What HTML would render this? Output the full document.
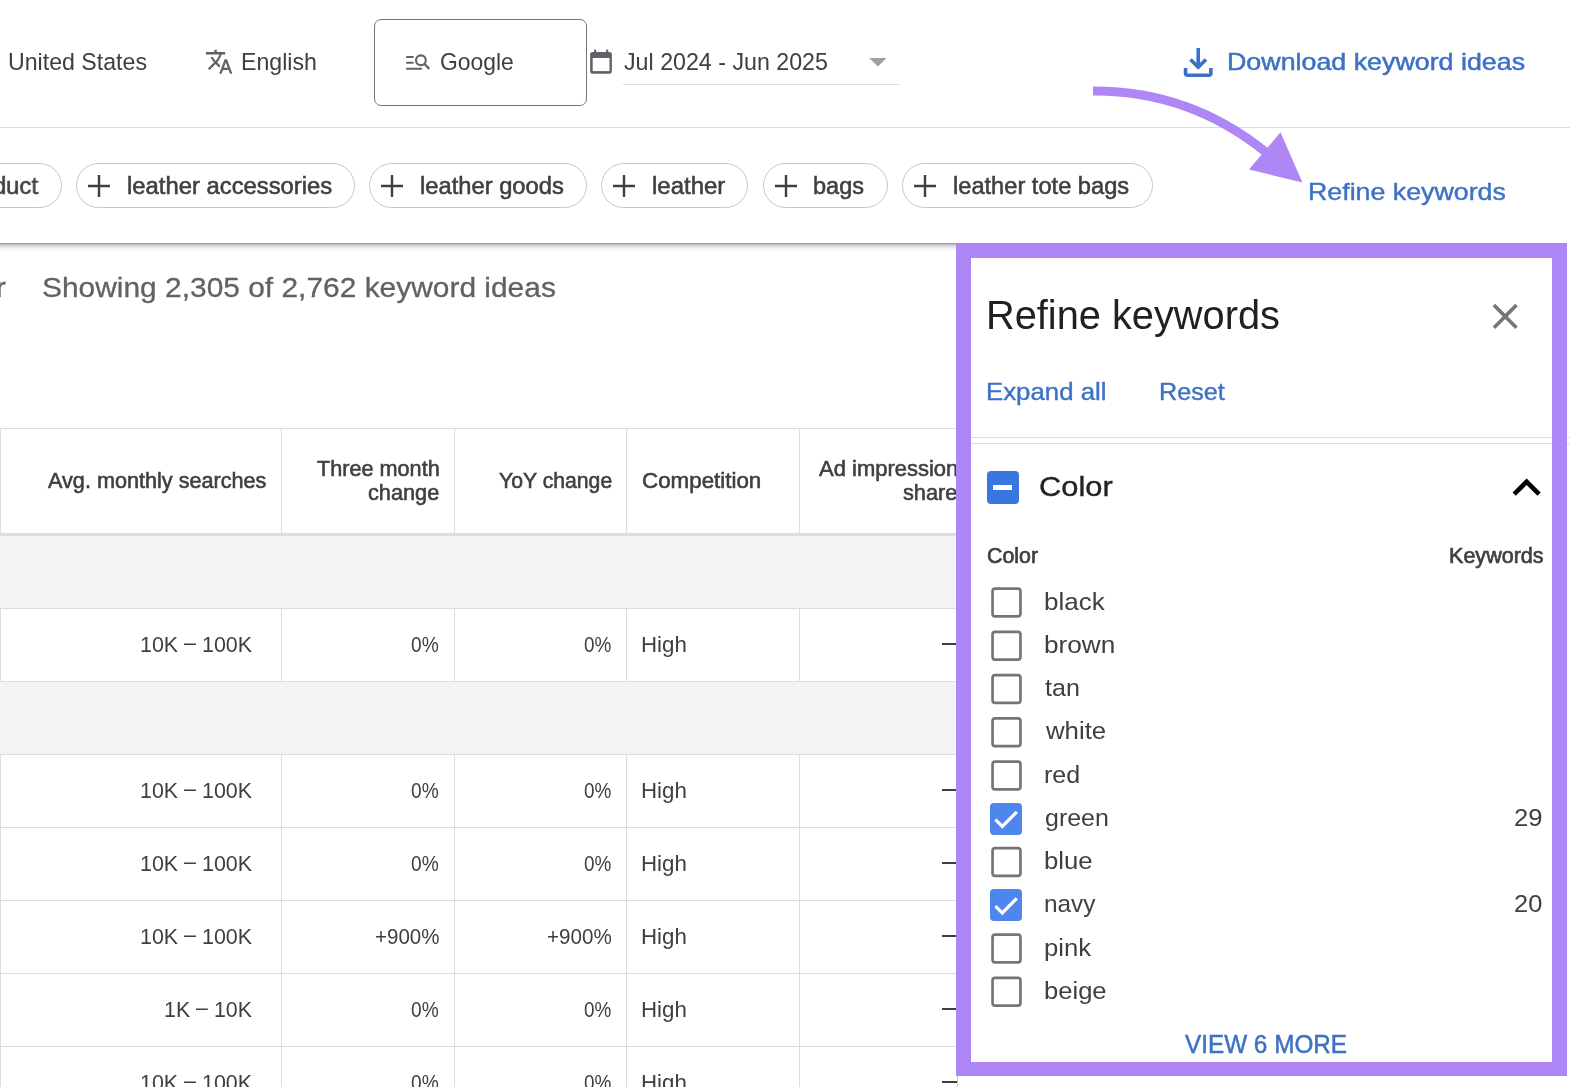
<!DOCTYPE html>
<html lang="en">
<head>
<meta charset="utf-8">
<title>Keyword ideas – Refine keywords</title>
<style>
html,body{margin:0;padding:0;background:#fff}
body{width:1570px;height:1087px;overflow:hidden;position:relative;font-family:"Liberation Sans",sans-serif}
#page{position:absolute;left:0;top:0;width:1570px;height:1087px;overflow:hidden;background:#fff}
.b{position:absolute}
.t{position:absolute;white-space:nowrap;line-height:1;transform-origin:0 0;font-weight:400;font-family:"Liberation Sans",sans-serif}
.ov{position:absolute;left:0;top:0;pointer-events:none}
#clipA{position:absolute;left:0;top:0;width:957px;height:1087px;overflow:hidden;will-change:transform}
#txt{position:absolute;left:0;top:0;width:1570px;height:1087px;will-change:transform}
</style>
</head>
<body>
<div id="page">
<div id="clipA">
<span class="t" style="left:818.86px;top:459px;font-size:21.3px;color:#3c4043;transform:scaleX(1.0321);-webkit-text-stroke:0.55px #3c4043;">Ad impression</span>
<span class="t" style="left:903.32px;top:483px;font-size:21.3px;color:#3c4043;transform:scaleX(1.0200);-webkit-text-stroke:0.55px #3c4043;">share</span>
</div>
<div class="b" style="left:0px;top:127px;width:1570px;height:1px;background:#dadce0"></div>
<div class="b" style="left:374px;top:19px;width:213px;height:87px;border:1px solid #747775;border-radius:7px;box-sizing:border-box"></div>
<div class="b" style="left:623px;top:84px;width:277px;height:1px;background:#dadce0"></div>
<div class="b" style="left:0px;top:243px;width:956px;height:9px;background:linear-gradient(to bottom,#8d8d8d 0,#b5b5b5 12%,#cfcfcf 25%,#e2e2e2 40%,#f0f0f0 58%,#f9f9f9 78%,#fff 100%)"></div>
<div class="b" style="left:-120px;top:163px;width:182px;height:45px;border:1px solid #c4c7c5;border-radius:23px;box-sizing:border-box"></div>
<div class="b" style="left:76px;top:163px;width:279px;height:45px;border:1px solid #c4c7c5;border-radius:23px;box-sizing:border-box"></div>
<div class="b" style="left:369px;top:163px;width:218px;height:45px;border:1px solid #c4c7c5;border-radius:23px;box-sizing:border-box"></div>
<div class="b" style="left:601px;top:163px;width:147px;height:45px;border:1px solid #c4c7c5;border-radius:23px;box-sizing:border-box"></div>
<div class="b" style="left:763px;top:163px;width:125px;height:45px;border:1px solid #c4c7c5;border-radius:23px;box-sizing:border-box"></div>
<div class="b" style="left:902px;top:163px;width:251px;height:45px;border:1px solid #c4c7c5;border-radius:23px;box-sizing:border-box"></div>
<div class="b" style="left:0px;top:428px;width:972px;height:1px;background:#dadce0"></div>
<div class="b" style="left:0px;top:533px;width:972px;height:3px;background:#dcdde0"></div>
<div class="b" style="left:0px;top:536px;width:972px;height:72.5px;background:#f1f3f4"></div>
<div class="b" style="left:0px;top:682px;width:972px;height:72.5px;background:#f1f3f4"></div>
<div class="b" style="left:0px;top:608px;width:972px;height:1px;background:#dadce0"></div>
<div class="b" style="left:0px;top:681px;width:972px;height:1px;background:#dadce0"></div>
<div class="b" style="left:0px;top:754px;width:972px;height:1px;background:#dadce0"></div>
<div class="b" style="left:0px;top:827px;width:972px;height:1px;background:#dadce0"></div>
<div class="b" style="left:0px;top:900px;width:972px;height:1px;background:#dadce0"></div>
<div class="b" style="left:0px;top:973px;width:972px;height:1px;background:#dadce0"></div>
<div class="b" style="left:0px;top:1046px;width:972px;height:1px;background:#dadce0"></div>
<div class="b" style="left:0px;top:429px;width:1px;height:104px;background:#dadce0"></div>
<div class="b" style="left:0px;top:609px;width:1px;height:72px;background:#dadce0"></div>
<div class="b" style="left:0px;top:755px;width:1px;height:332px;background:#dadce0"></div>
<div class="b" style="left:281px;top:429px;width:1px;height:104px;background:#dadce0"></div>
<div class="b" style="left:281px;top:609px;width:1px;height:72px;background:#dadce0"></div>
<div class="b" style="left:281px;top:755px;width:1px;height:332px;background:#dadce0"></div>
<div class="b" style="left:454px;top:429px;width:1px;height:104px;background:#dadce0"></div>
<div class="b" style="left:454px;top:609px;width:1px;height:72px;background:#dadce0"></div>
<div class="b" style="left:454px;top:755px;width:1px;height:332px;background:#dadce0"></div>
<div class="b" style="left:626px;top:429px;width:1px;height:104px;background:#dadce0"></div>
<div class="b" style="left:626px;top:609px;width:1px;height:72px;background:#dadce0"></div>
<div class="b" style="left:626px;top:755px;width:1px;height:332px;background:#dadce0"></div>
<div class="b" style="left:799px;top:429px;width:1px;height:104px;background:#dadce0"></div>
<div class="b" style="left:799px;top:609px;width:1px;height:72px;background:#dadce0"></div>
<div class="b" style="left:799px;top:755px;width:1px;height:332px;background:#dadce0"></div>
<div class="b" style="left:942px;top:643.1px;width:16px;height:2px;background:#3c4043"></div>
<div class="b" style="left:942px;top:789.1px;width:16px;height:2px;background:#3c4043"></div>
<div class="b" style="left:942px;top:862.1px;width:16px;height:2px;background:#3c4043"></div>
<div class="b" style="left:942px;top:935.1px;width:16px;height:2px;background:#3c4043"></div>
<div class="b" style="left:942px;top:1008.1px;width:16px;height:2px;background:#3c4043"></div>
<div class="b" style="left:942px;top:1081.1px;width:16px;height:2px;background:#3c4043"></div>
<div class="b" style="left:957px;top:252px;width:613px;height:835px;background:#fff"></div>
<div class="b" style="left:957px;top:1076px;width:1px;height:11px;background:#c8c8c8"></div>
<div class="b" style="left:956.3px;top:243.2px;width:611.1px;height:832.8px;background:#af86f5"></div>
<div class="b" style="left:971.2px;top:258.2px;width:581.1px;height:803.4px;background:#fff"></div>
<div class="b" style="left:971px;top:437px;width:599px;height:1px;background:#dadce0"></div>
<div class="b" style="left:971px;top:443px;width:599px;height:1px;background:#dadce0"></div>
<div class="b" style="left:1552.3px;top:430px;width:15.1px;height:20px;background:#af86f5"></div>
<div class="b" style="left:987px;top:471px;width:32px;height:32.5px;background:#3a76e0;border-radius:4px"></div>
<div class="b" style="left:993.3px;top:485px;width:18.8px;height:4.6px;background:#fff"></div>
<div class="b" style="left:990.2px;top:802.75px;width:32px;height:32px;background:#4d86ec;border-radius:4px"></div>
<div class="b" style="left:990.2px;top:889.25px;width:32px;height:32px;background:#4d86ec;border-radius:4px"></div>
<div id="txt">
<span class="t" style="left:7.91px;top:50px;font-size:24.3px;color:#3c4043;transform:scaleX(0.9530);">United States</span>
<span class="t" style="left:240.60px;top:50px;font-size:24.3px;color:#3c4043;transform:scaleX(0.9536);">English</span>
<span class="t" style="left:439.95px;top:50px;font-size:24.3px;color:#3c4043;transform:scaleX(0.9427);">Google</span>
<span class="t" style="left:623.54px;top:50px;font-size:24.3px;color:#3c4043;transform:scaleX(0.9555);">Jul 2024 - Jun 2025</span>
<span class="t" style="left:1227.00px;top:50px;font-size:23.8px;color:#3d71c6;transform:scaleX(1.1266);-webkit-text-stroke:0.5px #3d71c6;">Download keyword ideas</span>
<span class="t" style="left:1307.90px;top:180px;font-size:23.8px;color:#3d71c6;transform:scaleX(1.1247);-webkit-text-stroke:0.4px #3d71c6;">Refine keywords</span>
<span class="t" style="left:127.09px;top:174px;font-size:24.2px;color:#3c4043;transform:scaleX(0.9850);-webkit-text-stroke:0.55px #3c4043;">leather accessories</span>
<span class="t" style="left:420.20px;top:174px;font-size:24.2px;color:#3c4043;transform:scaleX(0.9808);-webkit-text-stroke:0.55px #3c4043;">leather goods</span>
<span class="t" style="left:651.88px;top:174px;font-size:24.2px;color:#3c4043;transform:scaleX(0.9912);-webkit-text-stroke:0.55px #3c4043;">leather</span>
<span class="t" style="left:813.48px;top:174px;font-size:24.2px;color:#3c4043;transform:scaleX(0.9716);-webkit-text-stroke:0.55px #3c4043;">bags</span>
<span class="t" style="left:953.41px;top:174px;font-size:24.2px;color:#3c4043;transform:scaleX(0.9775);-webkit-text-stroke:0.55px #3c4043;">leather tote bags</span>
<span class="t" style="left:-120.56px;top:174px;font-size:24.2px;color:#3c4043;transform:scaleX(0.9850);-webkit-text-stroke:0.55px #3c4043;">leather product</span>
<span class="t" style="left:42.04px;top:274px;font-size:27.9px;color:#5f6368;transform:scaleX(1.0725);-webkit-text-stroke:0.3px #5f6368;">Showing 2,305 of 2,762 keyword ideas</span>
<span class="t" style="left:-113.28px;top:274px;font-size:27.9px;color:#5f6368;transform:scaleX(1.0800);-webkit-text-stroke:0.3px #5f6368;">Add filter</span>
<span class="t" style="left:47.86px;top:471px;font-size:21.3px;color:#3c4043;transform:scaleX(1.0156);-webkit-text-stroke:0.55px #3c4043;">Avg. monthly searches</span>
<span class="t" style="left:317.01px;top:459px;font-size:21.3px;color:#3c4043;transform:scaleX(1.0161);-webkit-text-stroke:0.55px #3c4043;">Three month</span>
<span class="t" style="left:367.99px;top:483px;font-size:21.3px;color:#3c4043;transform:scaleX(1.0200);-webkit-text-stroke:0.55px #3c4043;">change</span>
<span class="t" style="left:498.53px;top:471px;font-size:21.3px;color:#3c4043;transform:scaleX(0.9956);-webkit-text-stroke:0.55px #3c4043;">YoY change</span>
<span class="t" style="left:641.66px;top:471px;font-size:21.3px;color:#3c4043;transform:scaleX(1.0497);-webkit-text-stroke:0.55px #3c4043;">Competition</span>
<span class="t" style="left:139.67px;top:634px;font-size:22.0px;color:#3c4043;transform:scaleX(0.9747);">10K <span style="position:relative;top:-2.4px">–</span> 100K</span>
<span class="t" style="left:411.35px;top:634px;font-size:22.0px;color:#3c4043;transform:scaleX(0.8689);">0%</span>
<span class="t" style="left:584.36px;top:634px;font-size:22.0px;color:#3c4043;transform:scaleX(0.8589);">0%</span>
<span class="t" style="left:640.77px;top:634px;font-size:22.0px;color:#3c4043;transform:scaleX(1.0139);">High</span>
<span class="t" style="left:139.67px;top:780px;font-size:22.0px;color:#3c4043;transform:scaleX(0.9747);">10K <span style="position:relative;top:-2.4px">–</span> 100K</span>
<span class="t" style="left:411.35px;top:780px;font-size:22.0px;color:#3c4043;transform:scaleX(0.8689);">0%</span>
<span class="t" style="left:584.36px;top:780px;font-size:22.0px;color:#3c4043;transform:scaleX(0.8589);">0%</span>
<span class="t" style="left:640.77px;top:780px;font-size:22.0px;color:#3c4043;transform:scaleX(1.0139);">High</span>
<span class="t" style="left:139.67px;top:853px;font-size:22.0px;color:#3c4043;transform:scaleX(0.9747);">10K <span style="position:relative;top:-2.4px">–</span> 100K</span>
<span class="t" style="left:411.35px;top:853px;font-size:22.0px;color:#3c4043;transform:scaleX(0.8689);">0%</span>
<span class="t" style="left:584.36px;top:853px;font-size:22.0px;color:#3c4043;transform:scaleX(0.8589);">0%</span>
<span class="t" style="left:640.77px;top:853px;font-size:22.0px;color:#3c4043;transform:scaleX(1.0139);">High</span>
<span class="t" style="left:139.67px;top:926px;font-size:22.0px;color:#3c4043;transform:scaleX(0.9747);">10K <span style="position:relative;top:-2.4px">–</span> 100K</span>
<span class="t" style="left:374.50px;top:926px;font-size:22.0px;color:#3c4043;transform:scaleX(0.9336);">+900%</span>
<span class="t" style="left:546.99px;top:926px;font-size:22.0px;color:#3c4043;transform:scaleX(0.9366);">+900%</span>
<span class="t" style="left:640.77px;top:926px;font-size:22.0px;color:#3c4043;transform:scaleX(1.0139);">High</span>
<span class="t" style="left:163.87px;top:999px;font-size:22.0px;color:#3c4043;transform:scaleX(0.9707);">1K <span style="position:relative;top:-2.4px">–</span> 10K</span>
<span class="t" style="left:411.35px;top:999px;font-size:22.0px;color:#3c4043;transform:scaleX(0.8689);">0%</span>
<span class="t" style="left:584.36px;top:999px;font-size:22.0px;color:#3c4043;transform:scaleX(0.8589);">0%</span>
<span class="t" style="left:640.77px;top:999px;font-size:22.0px;color:#3c4043;transform:scaleX(1.0139);">High</span>
<span class="t" style="left:139.67px;top:1072px;font-size:22.0px;color:#3c4043;transform:scaleX(0.9747);">10K <span style="position:relative;top:-2.4px">–</span> 100K</span>
<span class="t" style="left:411.35px;top:1072px;font-size:22.0px;color:#3c4043;transform:scaleX(0.8689);">0%</span>
<span class="t" style="left:584.36px;top:1072px;font-size:22.0px;color:#3c4043;transform:scaleX(0.8589);">0%</span>
<span class="t" style="left:640.77px;top:1072px;font-size:22.0px;color:#3c4043;transform:scaleX(1.0139);">High</span>
<span class="t" style="left:986.44px;top:295px;font-size:40.0px;color:#202124;transform:scaleX(0.9939);">Refine keywords</span>
<span class="t" style="left:986.28px;top:380px;font-size:24.4px;color:#3d71c6;transform:scaleX(1.0574);-webkit-text-stroke:0.4px #3d71c6;">Expand all</span>
<span class="t" style="left:1159.43px;top:380px;font-size:24.4px;color:#3d71c6;transform:scaleX(1.0319);-webkit-text-stroke:0.4px #3d71c6;">Reset</span>
<span class="t" style="left:1038.63px;top:472px;font-size:28.3px;color:#202124;transform:scaleX(1.0895);-webkit-text-stroke:0.35px #202124;">Color</span>
<span class="t" style="left:987.02px;top:546px;font-size:21.3px;color:#3c4043;transform:scaleX(1.0026);-webkit-text-stroke:0.65px #3c4043;">Color</span>
<span class="t" style="left:1449.03px;top:546px;font-size:21.3px;color:#3c4043;transform:scaleX(1.0121);-webkit-text-stroke:0.65px #3c4043;">Keywords</span>
<span class="t" style="left:1044.13px;top:590px;font-size:24.4px;color:#3c4043;transform:scaleX(1.0647);">black</span>
<span class="t" style="left:1044.11px;top:633px;font-size:24.4px;color:#3c4043;transform:scaleX(1.0730);">brown</span>
<span class="t" style="left:1045.42px;top:676px;font-size:24.4px;color:#3c4043;transform:scaleX(1.0292);">tan</span>
<span class="t" style="left:1045.84px;top:719px;font-size:24.4px;color:#3c4043;transform:scaleX(1.0572);">white</span>
<span class="t" style="left:1044.14px;top:763px;font-size:24.4px;color:#3c4043;transform:scaleX(1.0258);">red</span>
<span class="t" style="left:1044.75px;top:806px;font-size:24.4px;color:#3c4043;transform:scaleX(1.0237);">green</span>
<span class="t" style="left:1044.14px;top:849px;font-size:24.4px;color:#3c4043;transform:scaleX(1.0536);">blue</span>
<span class="t" style="left:1044.18px;top:892px;font-size:24.4px;color:#3c4043;transform:scaleX(0.9987);">navy</span>
<span class="t" style="left:1044.14px;top:936px;font-size:24.4px;color:#3c4043;transform:scaleX(1.0529);">pink</span>
<span class="t" style="left:1044.15px;top:979px;font-size:24.4px;color:#3c4043;transform:scaleX(1.0486);">beige</span>
<span class="t" style="left:1513.61px;top:806px;font-size:24.4px;color:#3c4043;transform:scaleX(1.0502);">29</span>
<span class="t" style="left:1513.62px;top:892px;font-size:24.4px;color:#3c4043;transform:scaleX(1.0417);">20</span>
<span class="t" style="left:1185.39px;top:1032px;font-size:25.2px;color:#3d71c6;transform:scaleX(0.9650);-webkit-text-stroke:0.5px #3d71c6;">VIEW 6 MORE</span>
</div>
<svg class="ov" width="1570" height="1087" viewBox="0 0 1570 1087">
<g fill="#5f6368">
<path transform="translate(204.8 47.3) scale(1.2)" d="M12.87 15.07l-2.54-2.51.03-.03c1.74-1.94 2.98-4.17 3.71-6.53H17V4h-7V2H8v2H1v1.990h11.170C11.500 7.920 10.440 9.750 9 11.350 8.070 10.320 7.300 9.190 6.690 8h-2c.73 1.630 1.730 3.170 2.980 4.560l-5.090 5.020L4 19l5-5 3.110 3.110.76-2.040zM18.500 10h-2L12 22h2l1.120-3h4.750L21 22h2l-4.500-12zm-2.620 7l1.620-4.330L19.120 17h-3.240z"/>
<rect x="590.1" y="52" width="21.8" height="21.7" rx="2.6"/>
<rect x="594.1" y="49.600" width="2.100" height="3.500"/><rect x="606.1" y="49.600" width="2.100" height="3.500"/>
<rect x="592.7" y="58" width="16.800" height="13.100" fill="#fff"/>
</g>
<g stroke="#5f6368" fill="none">
<path d="M406.200 56.900h7.400M406.200 62.800h7.400M406.200 68.800h15.700" stroke-width="2"/>
<circle cx="420.900" cy="60.300" r="4.900" stroke-width="2.100"/>
<path d="M424.300 63.800L429.300 68.900" stroke-width="2.300"/>
</g>
<path fill="#9aa0a6" d="M869.2 57.900h17.300l-8.650 8.700z"/>
<path fill="#3d71c6" transform="translate(1176.5 40.8) scale(1.81)" d="M18 15v3H6v-3H4v3c0 1.100.9 2 2 2h12c1.100 0 2-.9 2-2v-3h-2zm-1-4l-1.410-1.410L13 12.170V4h-2v8.170L8.410 9.590 7 11l5 5 5-5z"/>
<g stroke="#3c4043" stroke-width="2.4" fill="none">
<path d="M88 186h22M99 175v22"/><path d="M381 186h22M392 175v22"/><path d="M613 186h22M624 175v22"/><path d="M775 186h22M786 175v22"/><path d="M914 186h22M925 175v22"/>
</g>
<path fill="#757575" transform="translate(1483.65 294.85) scale(1.795)" d="M19 6.410L17.590 5 12 10.590 6.410 5 5 6.410 10.590 12 5 17.590 6.410 19 12 13.410 17.590 19 19 17.590 13.410 12z"/>
<path fill="#000" transform="translate(1498.4 459.6) scale(2.35)" d="M12 8l-6 6 1.410 1.410L12 10.830l4.590 4.580L18 14z"/>
<g stroke="#fff" stroke-width="3.2" fill="none">
<path d="M995.400 819.65l6.900 6.800 14.500-14.600"/><path d="M995.400 906.15l6.900 6.800 14.500-14.600"/>
</g>
<g stroke="#757575" stroke-width="2.7" fill="none">
<rect x="992.55" y="588.55" width="27.9" height="27.9" rx="2.6"/><rect x="992.55" y="631.80" width="27.9" height="27.9" rx="2.6"/><rect x="992.55" y="675.05" width="27.9" height="27.9" rx="2.6"/><rect x="992.55" y="718.30" width="27.9" height="27.9" rx="2.6"/><rect x="992.55" y="761.55" width="27.9" height="27.9" rx="2.6"/><rect x="992.55" y="848.05" width="27.9" height="27.9" rx="2.6"/><rect x="992.55" y="934.55" width="27.9" height="27.9" rx="2.6"/><rect x="992.55" y="977.80" width="27.9" height="27.9" rx="2.6"/>
</g>
<path d="M1093 91Q1189 90.500 1265 151.500L1268 153.900" stroke="#af86f5" stroke-width="9.2" fill="none"/>
<path d="M1302.400 182.500L1280.500 132.300 1248.900 169.500z" fill="#af86f5"/>
</svg>
</div>
</body>
</html>
